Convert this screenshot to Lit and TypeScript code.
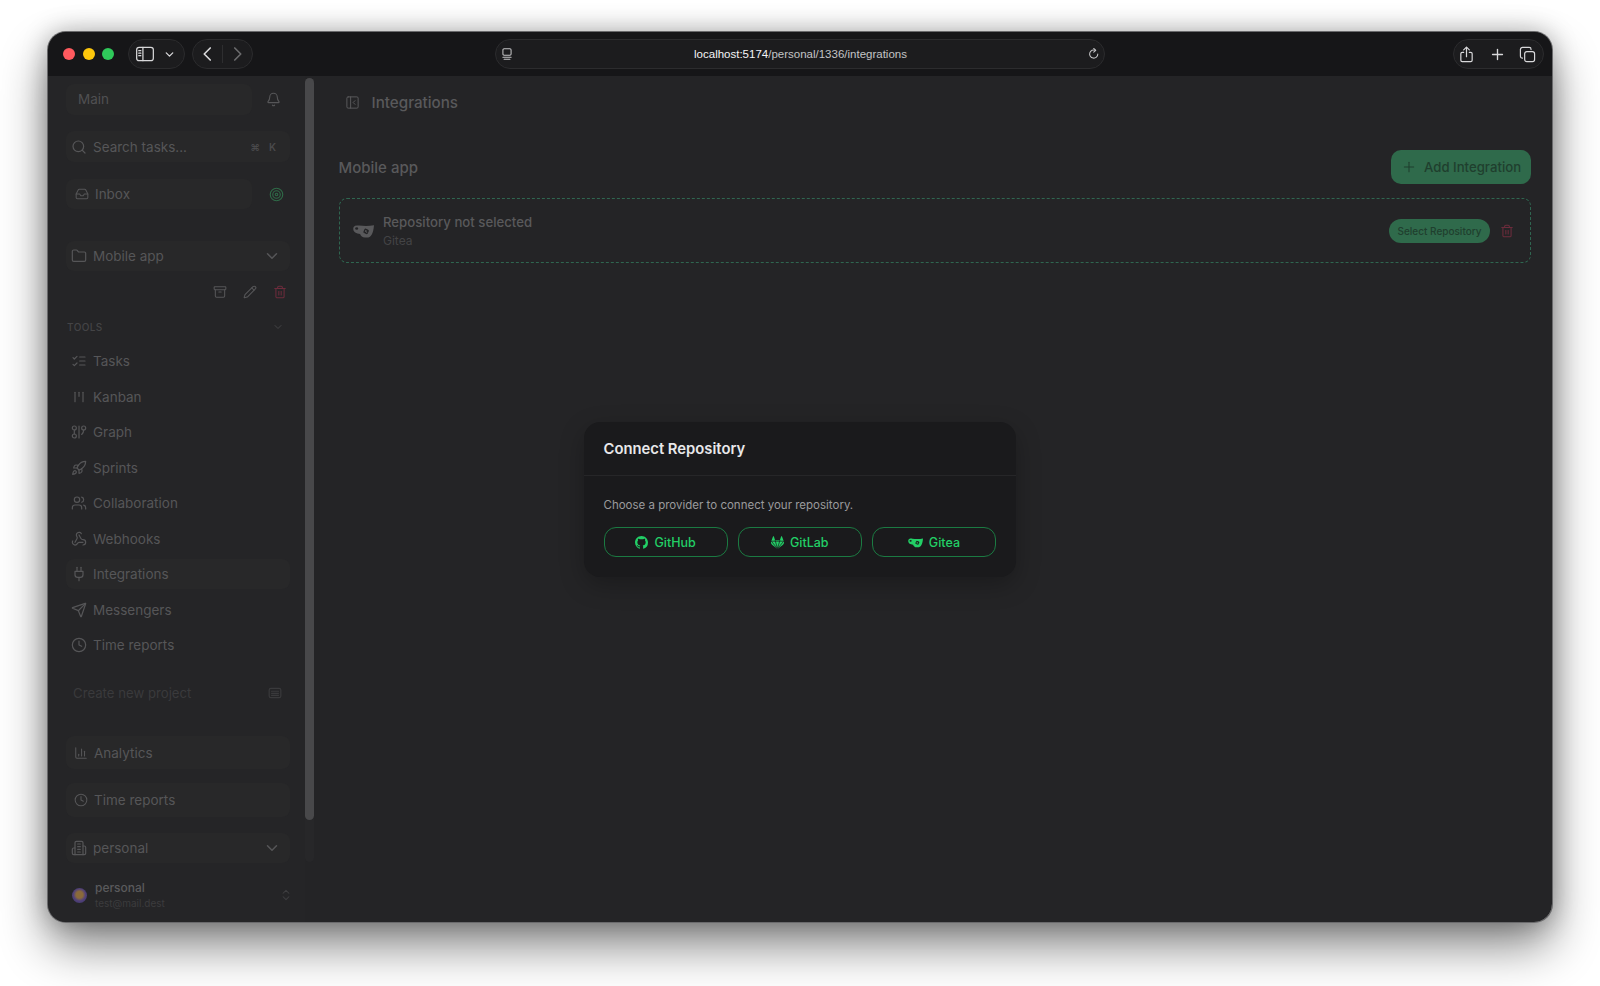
import { LitElement, html, css, svg } from 'lit';
import { customElement } from 'lit/decorators.js';

const paths: Record<string, any> = {
  bell: svg`<path d="M10.268 21a2 2 0 0 0 3.464 0"/><path d="M3.262 15.326A1 1 0 0 0 4 17h16a1 1 0 0 0 .74-1.673C19.41 13.956 18 12.499 18 8A6 6 0 0 0 6 8c0 4.499-1.411 5.956-2.738 7.326"/>`,
  search: svg`<circle cx="11" cy="11" r="8"/><path d="m21 21-4.3-4.3"/>`,
  inbox: svg`<polyline points="22 12 16 12 14 15 10 15 8 12 2 12"/><path d="M5.45 5.11 2 12v6a2 2 0 0 0 2 2h16a2 2 0 0 0 2-2v-6l-3.45-6.89A2 2 0 0 0 16.76 4H7.24a2 2 0 0 0-1.79 1.11z"/>`,
  target: svg`<circle cx="12" cy="12" r="10"/><circle cx="12" cy="12" r="6"/><circle cx="12" cy="12" r="2"/>`,
  folder: svg`<path d="M20 20a2 2 0 0 0 2-2V8a2 2 0 0 0-2-2h-7.9a2 2 0 0 1-1.69-.9L9.6 3.9A2 2 0 0 0 7.93 3H4a2 2 0 0 0-2 2v13a2 2 0 0 0 2 2Z"/>`,
  chevron: svg`<path d="m6 9 6 6 6-6"/>`,
  archive: svg`<rect width="20" height="5" x="2" y="3" rx="1"/><path d="M4 8v11a2 2 0 0 0 2 2h12a2 2 0 0 0 2-2V8"/><path d="M10 12h4"/>`,
  pencil: svg`<path d="M21.174 6.812a1 1 0 0 0-3.986-3.987L3.842 16.174a2 2 0 0 0-.5.83l-1.321 4.352a.5.5 0 0 0 .623.622l4.353-1.32a2 2 0 0 0 .83-.497z"/><path d="m15 5 4 4"/>`,
  trash: svg`<path d="M3 6h18"/><path d="M19 6v14c0 1-1 2-2 2H7c-1 0-2-1-2-2V6"/><path d="M8 6V4c0-1 1-2 2-2h4c1 0 2 1 2 2v2"/><line x1="10" x2="10" y1="11" y2="17"/><line x1="14" x2="14" y1="11" y2="17"/>`,
  tasks: svg`<path d="m3 17 2 2 4-4"/><path d="m3 7 2 2 4-4"/><path d="M13 6h8"/><path d="M13 12h8"/><path d="M13 18h8"/>`,
  kanban: svg`<path d="M6 5v14"/><path d="M12 5v6"/><path d="M18 5v14"/>`,
  graph: svg`<circle cx="5" cy="6" r="3"/><path d="M5 9v6"/><circle cx="5" cy="18" r="3"/><path d="M12 3v18"/><circle cx="19" cy="6" r="3"/><path d="M16 15.7A9 9 0 0 0 19 9"/>`,
  rocket: svg`<path d="M4.5 16.5c-1.5 1.26-2 5-2 5s3.74-.5 5-2c.71-.84.7-2.13-.09-2.91a2.18 2.18 0 0 0-2.91-.09z"/><path d="m12 15-3-3a22 22 0 0 1 2-3.95A12.88 12.88 0 0 1 22 2c0 2.72-.78 7.5-6 11a22.35 22.35 0 0 1-4 2z"/><path d="M9 12H4s.55-3.03 2-4c1.62-1.08 5 0 5 0"/><path d="M12 15v5s3.03-.55 4-2c1.08-1.62 0-5 0-5"/>`,
  users: svg`<path d="M16 21v-2a4 4 0 0 0-4-4H6a4 4 0 0 0-4 4v2"/><circle cx="9" cy="7" r="4"/><path d="M22 21v-2a4 4 0 0 0-3-3.87"/><path d="M16 3.13a4 4 0 0 1 0 7.75"/>`,
  webhook: svg`<path d="M18 16.98h-5.99c-1.1 0-1.95.94-2.48 1.9A4 4 0 0 1 2 17c.01-.7.2-1.4.57-2"/><path d="m6 17 3.13-5.78c.53-.97.1-2.18-.5-3.1a4 4 0 1 1 6.89-4.06"/><path d="m12 6 3.13 5.73C15.66 12.7 16.9 13 18 13a4 4 0 0 1 0 8"/>`,
  plug: svg`<path d="M12 22v-5"/><path d="M9 8V2"/><path d="M15 8V2"/><path d="M18 8v5a4 4 0 0 1-4 4h-4a4 4 0 0 1-4-4V8Z"/>`,
  send: svg`<path d="M14.536 21.686a.5.5 0 0 0 .937-.024l6.5-19a.496.496 0 0 0-.635-.635l-19 6.5a.5.5 0 0 0-.024.937l7.93 3.18a2 2 0 0 1 1.112 1.11z"/><path d="m21.854 2.147-10.94 10.939"/>`,
  clock: svg`<circle cx="12" cy="12" r="10"/><polyline points="12 6 12 12 16 14"/>`,
  memo: svg`<rect x="2" y="4" width="20" height="16" rx="3"/><path d="M6 9h12"/><path d="M6 12.5h12"/><path d="M6 16h12"/>`,
  chart: svg`<path d="M3 3v16a2 2 0 0 0 2 2h16"/><path d="M18 17V9"/><path d="M13 17V5"/><path d="M8 17v-3"/>`,
  building: svg`<path d="M6 22V4a2 2 0 0 1 2-2h8a2 2 0 0 1 2 2v18Z"/><path d="M6 12H4a2 2 0 0 0-2 2v6a2 2 0 0 0 2 2h2"/><path d="M18 9h2a2 2 0 0 1 2 2v9a2 2 0 0 1-2 2h-2"/><path d="M10 6h4"/><path d="M10 10h4"/><path d="M10 14h4"/><path d="M10 18h4"/>`,
  updown: svg`<path d="m7 15 5 5 5-5"/><path d="m7 9 5-5 5 5"/>`,
  panel: svg`<rect width="18" height="18" x="3" y="3" rx="2"/><path d="M9 3v18"/><path d="m16 15-3-3 3-3"/>`,
  plus: svg`<path d="M5 12h14"/><path d="M12 5v14"/>`,
  back: svg`<path d="m15 4-8 8 8 8"/>`,
  forward: svg`<path d="m9 4 8 8-8 8"/>`,
  sidebar: svg`<rect x="2" y="4" width="20" height="16" rx="3"/><path d="M9.5 4v16"/><path d="M4.5 8h2.5M4.5 11h2.5M4.5 14h2.5"/>`,
  site: svg`<rect x="5" y="3" width="14" height="11" rx="2"/><path d="M5 17.5h14"/><path d="M7 21h10"/>`,
  reload: svg`<path d="M18.5 12a7 7 0 1 1-4-6.3"/><path d="M11.5 2.5 15 5.8l-3.5 3"/>`,
  share: svg`<path d="M8 9H6a2 2 0 0 0-2 2v9a2 2 0 0 0 2 2h12a2 2 0 0 0 2-2v-9a2 2 0 0 0-2-2h-2"/><path d="M12 15V2"/><path d="m8 5.5 4-4 4 4"/>`,
  tabs: svg`<rect x="8" y="8" width="14" height="14" rx="3"/><path d="M17 5V4.500a2.500 2.500 0 0 0-2.500-2.500H5a3 3 0 0 0-3 3v9.500A2.500 2.500 0 0 0 4.500 17H5"/>`,
};

const icon = (name: string, size = 16, sw = 2) => html`<svg
  class="ic"
  width=${size}
  height=${size}
  viewBox="0 0 24 24"
  fill="none"
  stroke="currentColor"
  stroke-width=${sw}
  stroke-linecap="round"
  stroke-linejoin="round"
>${paths[name]}</svg>`;

const githubMark = html`<svg class="ic" width="13" height="13" viewBox="0 0 16 16" fill="currentColor"><path d="M8 0C3.58 0 0 3.58 0 8c0 3.54 2.29 6.53 5.47 7.59.4.07.55-.17.55-.38 0-.19-.01-.82-.01-1.49-2.01.37-2.53-.49-2.69-.94-.09-.23-.48-.94-.82-1.13-.28-.15-.68-.52-.01-.53.63-.01 1.08.58 1.23.82.72 1.21 1.87.87 2.33.66.07-.52.28-.87.51-1.07-1.78-.2-3.64-.89-3.64-3.95 0-.87.31-1.59.82-2.15-.08-.2-.36-1.02.08-2.12 0 0 .67-.21 2.2.82.64-.18 1.32-.27 2-.27.68 0 1.36.09 2 .27 1.53-1.04 2.2-.82 2.2-.82.44 1.1.16 1.92.08 2.12.51.56.82 1.27.82 2.15 0 3.07-1.87 3.75-3.65 3.95.29.25.54.73.54 1.48 0 1.07-.01 1.93-.01 2.2 0 .21.15.46.55.38A8.013 8.013 0 0016 8c0-4.42-3.58-8-8-8z"/></svg>`;

const gitlabMark = html`<svg class="ic" width="13" height="13" viewBox="0 0 24 24" fill="currentColor"><path d="m23.6 9.593-.033-.086L20.3.98a.851.851 0 0 0-.336-.405.875.875 0 0 0-1 .054.875.875 0 0 0-.29.44L16.47 7.818H7.537L5.333 1.07a.857.857 0 0 0-.29-.441.875.875 0 0 0-1-.054.859.859 0 0 0-.336.405L.433 9.502l-.032.086a6.066 6.066 0 0 0 2.012 7.01l.01.009.03.021 4.977 3.727 2.462 1.863 1.5 1.132a1.008 1.008 0 0 0 1.22 0l1.499-1.132 2.461-1.863 5.006-3.75.013-.01a6.068 6.068 0 0 0 2.01-7.002z"/><path d="M.6 9.6 12 23.6 23.4 9.6M7.500 7.800 12 23M16.500 7.800 12 23M.6 9.600h22.800" fill="none" stroke="#1a1a1c" stroke-width="1.300"/></svg>`;

// teacup: handle on the left, small badge on the cup
const giteaMark = (w: number, h: number, hole: string) => html`<svg class="ic" width=${w} height=${h} viewBox="0 0 24 16" fill="currentColor"><path d="M7 1.800C4 1.500 .3 1.700 .3 5.500c0 3.700 3.500 5.600 7.800 5.900.9 2.500 2.800 4.100 5.400 4.100h2.500c4.300 0 7.200-4 8-14.100C18 2.600 12 2.300 7 1.800z"/><ellipse cx="4.200" cy="5.200" rx="1.700" ry="1.400" fill=${hole}/><rect x="12.300" y="5.700" width="5.400" height="5.400" rx="1.400" transform="rotate(25 15 8.400)" fill=${hole}/><path d="M14 6.800l2 3.600M15.900 7.600l-2.400 1.400" stroke="currentColor" stroke-width="0.900" fill="none"/></svg>`;

const tools: [string, string][] = [
  ['tasks', 'Tasks'],
  ['kanban', 'Kanban'],
  ['graph', 'Graph'],
  ['rocket', 'Sprints'],
  ['users', 'Collaboration'],
  ['webhook', 'Webhooks'],
  ['plug', 'Integrations'],
  ['send', 'Messengers'],
  ['clock', 'Time reports'],
];

@customElement('app-root')
export class AppRoot extends LitElement {
  static styles = css`
    :host {
      display: block;
      box-sizing: border-box;
      width: 1600px;
      height: 986px;
      padding: 32px 48px 0;
      background: #ffffff;
      font-family: Inter, 'Liberation Sans', sans-serif;
      overflow: hidden;
    }
    * {
      box-sizing: border-box;
    }
    .ic {
      display: block;
      flex: none;
    }
    .window {
      position: relative;
      width: 1504px;
      height: 890px;
      border-radius: 18px;
      overflow: hidden;
      display: flex;
      flex-direction: column;
      background: #242426;
    }
    .frame {
      border-radius: 18px;
      box-shadow: 0 0 0 1px #6a6a6c, 0 24px 48px rgba(0, 0, 0, 0.48), 0 0 26px rgba(0, 0, 0, 0.28);
    }

    /* safari chrome */
    .titlebar {
      height: 44px;
      flex: none;
      display: flex;
      align-items: center;
      padding: 0 8px 0 15px;
      background: #161618;
      color: #d8d8da;
    }
    .lights {
      display: flex;
      gap: 7.5px;
      margin-right: 13.500px;
    }
    .light {
      width: 12px;
      height: 12px;
      border-radius: 50%;
    }
    .red { background: #ff5a5f; }
    .yellow { background: #fdc70c; }
    .green { background: #2fc95a; }
    .pill {
      height: 30px;
      border-radius: 15px;
      border: 1px solid #2c2c2e;
      background: #1c1c1e;
      display: flex;
      align-items: center;
    }
    .pill.view {
      width: 57px;
      padding-left: 6px;
      gap: 8px;
    }
    .pill.nav {
      width: 61px;
      margin-left: 7px;
      padding-left: 6px;
      gap: 5px;
    }
    .nav-sep {
      width: 1px;
      height: 18px;
      background: #2e2e30;
    }
    .dimmed {
      color: #6a6a6c;
    }
    .url {
      width: 610px;
      margin-left: 242px;
      padding: 0 2px 0 4px;
      justify-content: space-between;
      font-family: 'Liberation Sans', Arial, sans-serif;
      font-size: 11.500px;
      color: #c4c4c6;
    }
    .url b {
      font-weight: 400;
      color: #f4f4f6;
    }
    .pill.actions {
      width: 91px;
      margin-left: auto;
      padding-left: 4px;
      gap: 13.500px;
    }

    .body {
      flex: 1;
      display: flex;
      min-height: 0;
    }

    /* sidebar */
    .sidebar {
      width: 257px;
      flex: none;
      padding: 0 15px 0 18px;
      display: flex;
      flex-direction: column;
      color: #565658;
      background: #252527;
      font-size: 13.500px;
    }
    .row {
      display: flex;
      align-items: center;
      flex: none;
      height: 30px;
      border-radius: 8px;
      padding-left: 5px;
      gap: 6px;
      white-space: nowrap;
    }
    .box {
      background: #282829;
    }
    .chev {
      margin-left: auto;
      margin-right: 9px;
    }
    .main-row {
      margin-top: 8px;
      gap: 0;
      padding: 0;
    }
    .main-box {
      width: 186px;
      height: 31px;
      padding-left: 12px;
      line-height: 31px;
      border-radius: 8px;
      color: #505052;
    }
    .main-row .ic {
      margin-left: 14px;
    }
    .search {
      margin-top: 17px;
      height: 31px;
    }
    .kbd {
      margin-left: auto;
      margin-right: 14px;
      display: flex;
      gap: 9px;
      font-size: 10px;
      font-weight: 600;
      color: #4a4a4c;
    }
    .inbox {
      margin-top: 17px;
      flex: none;
    }
    .inbox-box {
      width: 186px;
      padding-left: 9px;
    }
    .inbox-wrap {
      display: flex;
      align-items: center;
    }
    .goal {
      margin-left: 17px;
      color: #2f6a47;
    }
    .project {
      margin-top: 32px;
    }
    .acts {
      margin-top: 13px;
      height: 16px;
      display: flex;
      justify-content: flex-end;
      align-items: center;
      gap: 16px;
      padding-right: 3px;
      flex: none;
    }
    .red-ic {
      color: #6d2c3c;
    }
    .tools-head {
      margin-top: 20px;
      height: 14px;
      display: flex;
      align-items: center;
      justify-content: space-between;
      flex: none;
      padding: 0 6px 0 1px;
      font-size: 10px;
      font-weight: 500;
      letter-spacing: 0.4px;
      color: #444446;
    }
    .tool-list {
      margin-top: 12px;
      display: flex;
      flex-direction: column;
      gap: 5.500px;
    }
    .create {
      margin-top: 23px;
      height: 20px;
      display: flex;
      align-items: center;
      justify-content: space-between;
      flex: none;
      padding: 0 8px 0 7px;
      font-size: 13.200px;
      color: #3a3a3c;
    }
    .wide {
      padding-left: 8px;
    }
    .analytics {
      margin-top: 33px;
      height: 33px;
    }
    .reports {
      margin-top: 14px;
      height: 34px;
    }
    .org {
      margin-top: 16px;
    }
    .user {
      margin-top: 16px;
      height: 32px;
      display: flex;
      align-items: center;
      flex: none;
      padding-left: 6px;
      gap: 8px;
    }
    .avatar {
      width: 15px;
      height: 15px;
      border-radius: 50%;
      flex: none;
      background: radial-gradient(circle at 50% 45%, #8a6a3a 0 30%, #50407a 55%, #3a3560 100%);
    }
    .user-name {
      font-size: 12px;
      font-weight: 500;
      line-height: 15px;
      color: #5a5a5c;
    }
    .user-mail {
      font-size: 10px;
      line-height: 16px;
      color: #3c3c3e;
    }
    .user .ic {
      margin-left: auto;
      margin-right: -3px;
      color: #3e3e40;
    }

    .track {
      width: 9px;
      flex: none;
      height: 784px;
      margin-top: 2px;
      background: #272729;
      border-radius: 5px;
    }
    .thumb {
      height: 742px;
      border-radius: 5px;
      background: #48484a;
    }

    /* main */
    .main {
      flex: 1;
      min-width: 0;
      padding: 16px 21px 0 24.500px;
      color: #59595b;
    }
    .head {
      height: 20px;
      display: flex;
      align-items: center;
      gap: 12px;
      padding-left: 6px;
      font-size: 15.200px;
      font-weight: 500;
    }
    .title-row {
      margin-top: 38px;
      height: 34px;
      display: flex;
      align-items: center;
      justify-content: space-between;
      font-size: 15px;
      font-weight: 500;
    }
    .add {
      width: 140px;
      height: 34px;
      border-radius: 10px;
      background: #2f6a4b;
      color: #1f3f2e;
      display: flex;
      align-items: center;
      padding-left: 10px;
      gap: 7px;
      font-size: 13.200px;
      font-weight: 500;
    }
    .card {
      margin-top: 14px;
      height: 65px;
      border: 1px dashed #2f6650;
      border-radius: 8px;
      display: flex;
      align-items: center;
      padding: 0 16px 0 13px;
    }
    .card-text {
      margin-left: 9.500px;
    }
    .repo {
      font-size: 13.200px;
      font-weight: 500;
      line-height: 20px;
    }
    .sub {
      font-size: 12px;
      line-height: 18px;
      color: #434345;
    }
    .select {
      margin-left: auto;
      width: 101px;
      height: 24px;
      border-radius: 12px;
      background: #2f6a4b;
      color: #1f3f2e;
      font-size: 10px;
      font-weight: 500;
      display: flex;
      align-items: center;
      justify-content: center;
    }
    .card .red-ic {
      margin-left: 10px;
    }

    /* dialog */
    .overlay {
      position: absolute;
      inset: 44px 0 0;
      padding-top: 1px;
      display: flex;
      align-items: center;
      justify-content: center;
    }
    .modal {
      width: 432px;
      height: 155px;
      border-radius: 16px;
      background: #1a1a1c;
      box-shadow: 0 8px 24px rgba(0, 0, 0, 0.25);
    }
    .modal-head {
      height: 54px;
      padding-left: 19.500px;
      display: flex;
      align-items: center;
      border-bottom: 1px solid #262628;
      font-size: 14.800px;
      font-weight: 600;
      color: #e8e8ea;
    }
    .modal-body {
      padding: 21px 20px 0 19.500px;
    }
    .desc {
      font-size: 11.500px;
      line-height: 16px;
      color: #9a9a9c;
    }
    .providers {
      margin-top: 14px;
      display: grid;
      grid-template-columns: repeat(3, 1fr);
      gap: 10px;
    }
    .provider {
      height: 30px;
      border: 1px solid #1b7a42;
      border-radius: 12px;
      display: flex;
      align-items: center;
      justify-content: center;
      gap: 6px;
      font-size: 12.500px;
      font-weight: 500;
      color: #22cf66;
    }
  `;

  render() {
    return html`
      <div class="frame">
        <div class="window">
          <div class="titlebar">
            <div class="lights">
              <span class="light red"></span><span class="light yellow"></span><span class="light green"></span>
            </div>
            <div class="pill view">${icon('sidebar', 20, 1.5)}<span>${icon('chevron', 13, 2.4)}</span></div>
            <div class="pill nav">
              ${icon('back', 18, 2.2)}
              <span class="nav-sep"></span>
              <span class="dimmed">${icon('forward', 18, 2.2)}</span>
            </div>
            <div class="pill url">
              ${icon('site', 14, 1.8)}
              <span><b>localhost:5174</b>/personal/1336/integrations</span>
              ${icon('reload', 14, 1.8)}
            </div>
            <div class="pill actions">
              ${icon('share', 17, 1.7)} ${icon('plus', 17, 1.9)} ${icon('tabs', 17, 1.7)}
            </div>
          </div>
          <div class="body">
            <div class="sidebar">
              <div class="row main-row">
                <div class="main-box box">Main</div>
                ${icon('bell', 15, 1.8)}
              </div>
              <div class="row box search">
                ${icon('search', 16, 1.8)}
                <span>Search tasks...</span>
                <span class="kbd"><span>⌘</span><span>K</span></span>
              </div>
              <div class="inbox-wrap inbox">
                <div class="row box inbox-box">${icon('inbox', 14, 1.8)}<span>Inbox</span></div>
                <span class="goal">${icon('target', 15, 1.8)}</span>
              </div>
              <div class="row box project">
                ${icon('folder', 16, 1.8)}
                <span>Mobile app</span>
                <span class="chev">${icon('chevron', 18, 2)}</span>
              </div>
              <div class="acts">
                ${icon('archive', 14, 1.8)} ${icon('pencil', 14, 1.8)}
                <span class="red-ic">${icon('trash', 14, 1.8)}</span>
              </div>
              <div class="tools-head"><span>TOOLS</span>${icon('chevron', 12, 2)}</div>
              <div class="tool-list">
                ${tools.map(
                  ([ic, label]) => html`<div class="row ${label === 'Integrations' ? 'box' : ''}">
                    ${icon(ic, 16, 1.8)}<span>${label}</span>
                  </div>`,
                )}
              </div>
              <div class="create"><span>Create new project</span>${icon('memo', 14, 2)}</div>
              <div class="row box wide analytics">${icon('chart', 14, 1.8)}<span>Analytics</span></div>
              <div class="row box wide reports">${icon('clock', 14, 1.8)}<span>Time reports</span></div>
              <div class="row box org">
                ${icon('building', 16, 1.8)}
                <span>personal</span>
                <span class="chev">${icon('chevron', 18, 2)}</span>
              </div>
              <div class="user">
                <span class="avatar"></span>
                <div>
                  <div class="user-name">personal</div>
                  <div class="user-mail">test@mail.dest</div>
                </div>
                ${icon('updown', 14, 1.8)}
              </div>
            </div>
            <div class="track"><div class="thumb"></div></div>
            <div class="main">
              <div class="head">${icon('panel', 15, 1.6)}<span>Integrations</span></div>
              <div class="title-row">
                <span>Mobile app</span>
                <div class="add">${icon('plus', 16, 1.6)}<span>Add Integration</span></div>
              </div>
              <div class="card">
                ${giteaMark(21, 14, '#242426')}
                <div class="card-text">
                  <div class="repo">Repository not selected</div>
                  <div class="sub">Gitea</div>
                </div>
                <div class="select">Select Repository</div>
                <span class="red-ic">${icon('trash', 14, 1.8)}</span>
              </div>
            </div>
          </div>
          <div class="overlay">
            <div class="modal">
              <div class="modal-head">Connect Repository</div>
              <div class="modal-body">
                <div class="desc">Choose a provider to connect your repository.</div>
                <div class="providers">
                  <div class="provider">${githubMark}<span>GitHub</span></div>
                  <div class="provider">${gitlabMark}<span>GitLab</span></div>
                  <div class="provider">${giteaMark(15, 11, '#1a1a1c')}<span>Gitea</span></div>
                </div>
              </div>
            </div>
          </div>
        </div>
      </div>
    `;
  }
}
